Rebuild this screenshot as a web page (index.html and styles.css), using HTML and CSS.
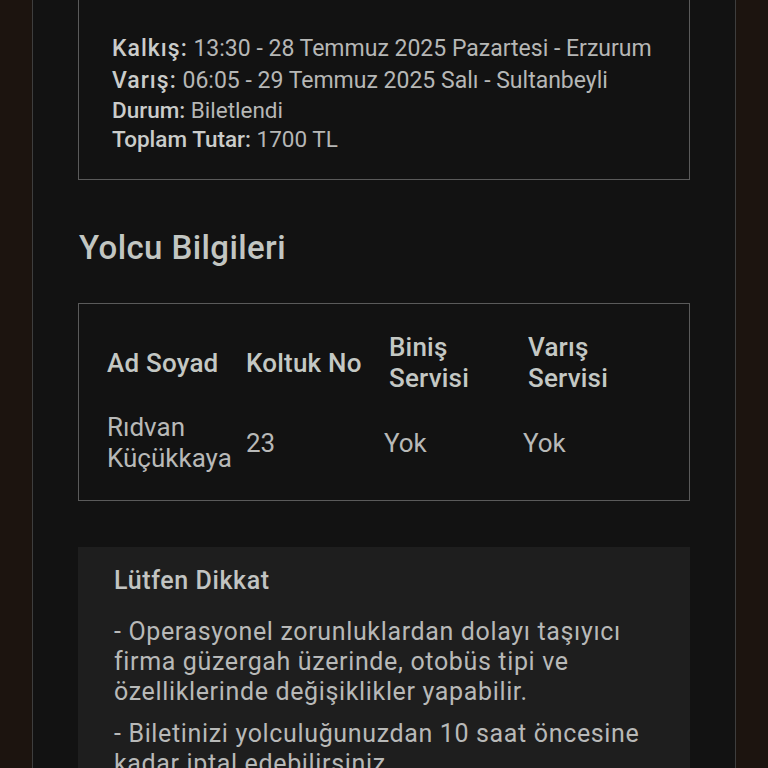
FILE: index.html
```html
<!DOCTYPE html>
<html lang="tr">
<head>
<meta charset="utf-8">
<title>Bilet Detayı</title>
<link rel="stylesheet" href="styles.css">
</head>
<body>
<div class="page">
  <section class="card trip">
    <p class="line big first"><span class="label">Kalkış:</span> 13:30 - 28 Temmuz 2025 Pazartesi - Erzurum</p>
    <p class="line big"><span class="label">Varış:</span> 06:05 - 29 Temmuz 2025 Salı - Sultanbeyli</p>
    <p class="line"><span class="label">Durum:</span> Biletlendi</p>
    <p class="line"><span class="label">Toplam Tutar:</span> 1700 TL</p>
  </section>

  <h2 class="section-title">Yolcu Bilgileri</h2>

  <section class="card passengers">
    <div class="grid">
      <div class="th">Ad Soyad</div>
      <div class="th">Koltuk No</div>
      <div class="th shift">Biniş<br>Servisi</div>
      <div class="th shift">Varış<br>Servisi</div>
      <div class="td">Rıdvan<br>Küçükkaya</div>
      <div class="td">23</div>
      <div class="td">Yok</div>
      <div class="td">Yok</div>
    </div>
  </section>

  <section class="notice">
    <h3 class="notice-title">Lütfen Dikkat</h3>
    <p class="notice-text">- Operasyonel zorunluklardan dolayı taşıyıcı firma güzergah üzerinde, otobüs tipi ve özelliklerinde değişiklikler yapabilir.</p>
    <p class="notice-text">- Biletinizi yolculuğunuzdan 10 saat öncesine kadar iptal edebilirsiniz.</p>
  </section>
</div>
</body>
</html>
```

FILE: styles.css
```css
* { box-sizing: border-box; }

html, body {
  margin: 0;
  padding: 0;
  height: 100%;
  background: #1c140f;
  font-family: Roboto, "Noto Sans", Arial, sans-serif;
  color: #c4c6c4;
  overflow: hidden;
}

.page {
  margin: 0 32px;
  min-height: 100%;
  background: #121212;
  border-left: 1px solid #3e3e3e;
  border-right: 1px solid #3e3e3e;
  padding: 0 45px;
}

.card {
  border: 1px solid #5a5a5a;
}

.trip {
  border-top: none;
  padding: 34px 33px 25px 33px;
}

.line {
  margin: 0;
  font-size: 22.5px;
  line-height: 29px;
  color: #b6b7b6;
}

.line.big {
  font-size: 23px;
  line-height: 30px;
}

.line.big .label {
  letter-spacing: 1px;
}

.line.first {
  margin-bottom: 2px;
}

.label {
  font-weight: 500;
  color: #caccca;
}

.section-title {
  margin: 46px 0 33px 1px;
  font-size: 33px;
  line-height: 44px;
  font-weight: 500;
  letter-spacing: 0.4px;
  color: #c2c6c2;
}

.passengers {
  padding: 28px 28px 26px 28px;
}

.grid {
  display: grid;
  grid-template-columns: 139px 138px 139px auto;
  row-gap: 18px;
  align-items: center;
}

.th {
  font-size: 26px;
  line-height: 31px;
  font-weight: 500;
  letter-spacing: 0.2px;
  color: #c4c8c4;
}

.th.shift {
  padding-left: 5px;
}

.td {
  font-size: 26px;
  line-height: 31px;
  color: #b8b9b8;
}

.notice {
  margin-top: 46px;
  background: #1e1e1e;
  padding: 19px 36px 30px 36px;
}

.notice-title {
  margin: 0 0 21px 0;
  font-size: 25px;
  line-height: 30px;
  font-weight: 500;
  letter-spacing: 0.6px;
  color: #c2c4c2;
}

.notice-text {
  margin: 0 0 12px 0;
  font-size: 25px;
  line-height: 30px;
  letter-spacing: 0.65px;
  color: #b8b9b8;
}
```
